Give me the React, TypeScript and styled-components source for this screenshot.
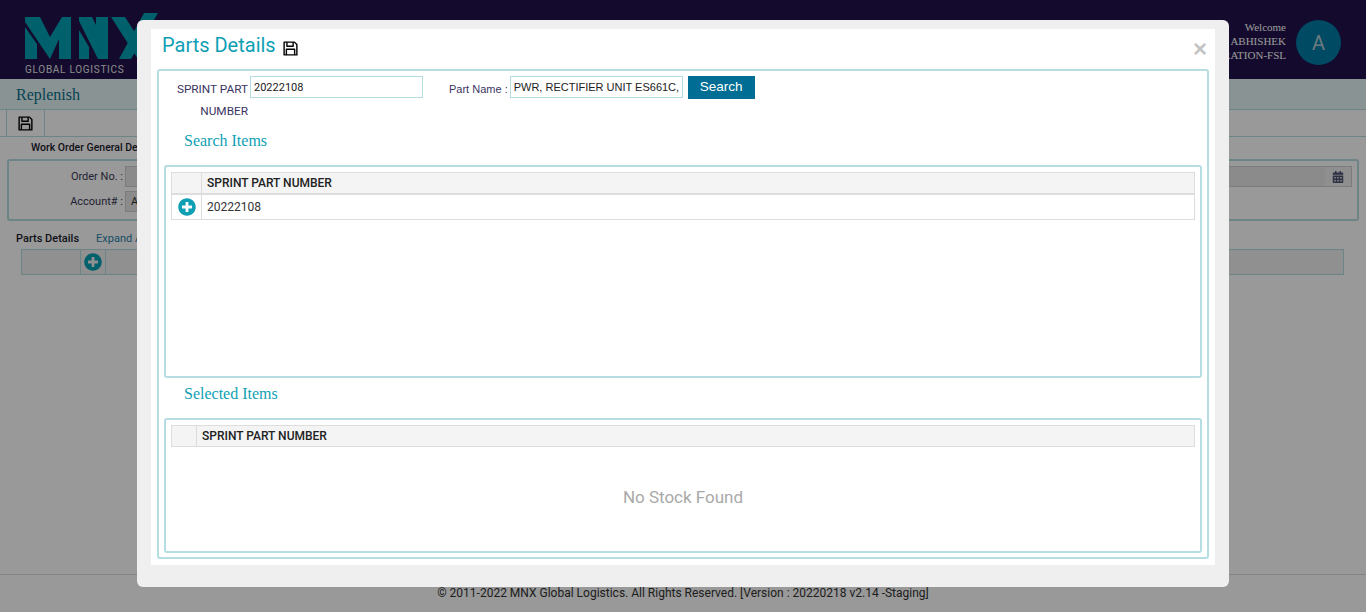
import styled, { createGlobalStyle } from "styled-components";
import { FaPlusCircle, FaCalendarAlt } from "react-icons/fa";

const GlobalStyle = createGlobalStyle`
  html, body {
    margin: 0;
    height: 100%;
    background: #fff;
    font-family: Roboto, "Liberation Sans", sans-serif;
    overflow: hidden;
  }
`;

const Page = styled.div`
  width: 1366px;
  height: 612px;
  display: flex;
  flex-direction: column;
  overflow: hidden;
`;

const Header = styled.header`
  height: 79px;
  flex: none;
  background: #20124b;
  display: flex;
  align-items: flex-start;
  justify-content: space-between;
  padding: 0 25px;
`;

const Brand = styled.div`
  display: flex;
  flex-direction: column;
  padding-top: 13px;
`;

const BrandName = styled.span`
  font-size: 10px;
  letter-spacing: 0.72px;
  color: #e6e6e6;
  margin-top: 4px;
  line-height: 12px;
`;

const User = styled.div`
  display: flex;
  gap: 10px;
  padding-top: 20px;
`;

const UserText = styled.div`
  font-family: "Liberation Serif", serif;
  font-size: 11px;
  line-height: 14px;
  color: #fff;
  text-align: right;
`;

const Avatar = styled.div`
  width: 45px;
  height: 45px;
  border-radius: 50%;
  background: #007ca5;
  color: #b5cbd6;
  font-size: 20px;
  display: flex;
  align-items: center;
  justify-content: center;
`;

const TitleBar = styled.div`
  height: 30px;
  flex: none;
  background: #e6f6f6;
  border-bottom: 1px solid #b6dde2;
  padding-left: 16px;
  font-family: "Liberation Serif", serif;
  font-size: 16px;
  line-height: 32px;
  color: #08708c;
`;

const ToolBar = styled.div`
  height: 26px;
  flex: none;
  border-bottom: 1px solid #b6dde2;
  padding-left: 6px;
  display: flex;
`;

const ToolButton = styled.div`
  width: 37px;
  border-left: 1px solid #b6dde2;
  border-right: 1px solid #b6dde2;
  display: flex;
  align-items: center;
  justify-content: center;
  color: #000;
`;

const GroupLabel = styled.div`
  font-size: 10.5px;
  font-weight: 500;
  color: #1c1c2c;
  padding-left: 31px;
  height: 22px;
  flex: none;
  line-height: 21px;
`;

const GeneralBox = styled.div`
  margin: 0 7px;
  height: 62px;
  flex: none;
  box-sizing: border-box;
  border: 2px solid #b6dde2;
  border-radius: 3px;
  display: flex;
  flex-direction: column;
  gap: 4px;
  padding: 5px 5px 0 0;
`;

const FormRow = styled.div`
  display: flex;
  height: 21px;
`;

const FormLabel = styled.span`
  width: 114px;
  margin-right: 2px;
  text-align: right;
  font-size: 11px;
  color: #3a3a55;
  line-height: 21px;
`;

const ReadField = styled.div<{ $wide?: boolean }>`
  box-sizing: border-box;
  width: ${(p) => (p.$wide ? "auto" : "300px")};
  flex: ${(p) => (p.$wide ? 1 : "none")};
  border: 1px solid #cfcfcf;
  background: #e8e8e8;
  display: flex;
  align-items: center;
  justify-content: space-between;
  padding-left: 5px;
  font-size: 11px;
  color: #333;
`;

const FieldAddon = styled.span`
  width: 26px;
  height: 100%;
  background: #eeeeee;
  display: flex;
  align-items: center;
  justify-content: center;
  color: #4c5270;
  font-size: 12px;
`;

const PartsRow = styled.div`
  display: flex;
  gap: 17px;
  padding: 10px 0 0 16px;
  font-size: 11px;
  line-height: 16px;
`;

const PartsTitle = styled.span`
  font-weight: 500;
  color: #1c1c2c;
`;

const PartsLink = styled.span`
  color: #2a7fa8;
`;

const PartsTable = styled.div`
  margin: 2px 22px 0 21px;
  height: 26px;
  flex: none;
  box-sizing: border-box;
  background: #f1f1f1;
  border: 1px solid #b6dde2;
  display: grid;
  grid-template-columns: 59px 25px 1fr;
`;

const PartsCell = styled.div`
  border-right: 1px solid #b6dde2;
  display: flex;
  align-items: center;
  justify-content: center;
  color: #00a0b4;
  font-size: 18px;
  &:last-child {
    border-right: none;
  }
`;

const PageBody = styled.div`
  flex: 1;
`;

const Footer = styled.footer`
  height: 38px;
  flex: none;
  box-sizing: border-box;
  border-top: 1px solid #ddd;
  text-align: center;
  font-size: 12px;
  line-height: 37px;
  color: #333;
`;

const Overlay = styled.div`
  position: fixed;
  inset: 0;
  background: rgba(0, 0, 0, 0.4);
`;

const Modal = styled.div`
  position: fixed;
  left: 137px;
  top: 20px;
  width: 1092px;
  height: 567px;
  box-sizing: border-box;
  background: #efefef;
  border-radius: 6px;
  padding: 9px 14px 22px;
`;

const ModalInner = styled.div`
  height: 100%;
  background: #fff;
  display: flex;
  flex-direction: column;
  padding: 0 6px 6px 6px;
  box-sizing: border-box;
`;

const ModalHead = styled.div`
  height: 40px;
  flex: none;
  display: flex;
  align-items: flex-start;
  justify-content: space-between;
  padding: 4px 2px 0 5px;
  box-sizing: border-box;
`;

const ModalTitle = styled.h2`
  margin: 0;
  font-weight: 400;
  font-size: 20px;
  line-height: 24px;
  color: #0f9fb5;
  display: flex;
  align-items: center;
  gap: 7px;
`;

const TitleIcon = styled.span`
  display: flex;
  color: #000;
  margin-top: 7px;
`;

const Close = styled.span`
  font-family: "Liberation Sans", sans-serif;
  font-size: 24px;
  font-weight: 700;
  line-height: 24px;
  margin-top: 4px;
  color: #c4c4c4;
`;

const OuterBox = styled.div`
  flex: 1;
  min-height: 0;
  border: 2px solid #b6dde2;
  border-radius: 3px;
  padding: 5px 5px 4px 5px;
  display: flex;
  flex-direction: column;
`;

const SearchForm = styled.div`
  display: flex;
  align-items: flex-start;
  height: 49px;
  flex: none;
  padding-left: 8px;
`;

const FieldLabel = styled.label`
  font-size: 12px;
  line-height: 22px;
  color: #3a3560;
  text-align: right;
  padding-top: 2px;
`;

const SprintLabel = styled(FieldLabel)`
  width: 76px;
  margin-right: 2px;
  font-size: 11.8px;
`;

const PartLabel = styled(FieldLabel)`
  margin-left: 26px;
  margin-right: 2px;
  font-family: "Liberation Sans", sans-serif;
  font-size: 11px;
  line-height: 23px;
  white-space: nowrap;
`;

const TextField = styled.input<{ $sans?: boolean }>`
  width: 173px;
  height: 22px;
  box-sizing: border-box;
  border: 1px solid #b6dde2;
  padding: 0 3px;
  font-size: 11px;
  color: #222;
  font-family: ${(p) => (p.$sans ? '"Liberation Sans", sans-serif' : "Roboto, sans-serif")};
  outline: none;
`;

const SearchButton = styled.button`
  width: 67px;
  height: 23px;
  margin: 0 0 0 5px;
  border: none;
  background: #006d94;
  color: #fff;
  font-family: "Liberation Sans", sans-serif;
  font-size: 13.5px;
  padding: 0 0 3px;
`;

const SectionTitle = styled.h3`
  margin: 0;
  height: 40px;
  flex: none;
  padding-left: 20px;
  font-family: "Liberation Serif", serif;
  font-weight: 400;
  font-size: 16px;
  line-height: 32px;
  color: #0f9fb5;
  box-sizing: border-box;
`;

const Section = styled.div<{ $height: number }>`
  height: ${(p) => p.$height}px;
  flex: none;
  box-sizing: border-box;
  border: 2px solid #b6dde2;
  border-radius: 3px;
  padding: 5px 5px 0;
  display: flex;
  flex-direction: column;
`;

const GridRow = styled.div<{ $cols: string; $head?: boolean; $h: number; $thin?: boolean }>`
  display: grid;
  grid-template-columns: ${(p) => p.$cols};
  height: ${(p) => p.$h}px;
  flex: none;
  box-sizing: border-box;
  border: 1px solid #ddd;
  border-top-width: ${(p) => (p.$head ? 1 : 0)}px;
  border-bottom-width: ${(p) => (p.$head && !p.$thin ? 2 : 1)}px;
  background: ${(p) => (p.$head ? "#f4f4f4" : "#fff")};
`;

const GridCell = styled.div<{ $head?: boolean }>`
  display: flex;
  align-items: center;
  padding-left: 5px;
  border-left: 1px solid #ddd;
  font-size: 12px;
  font-weight: ${(p) => (p.$head ? 500 : 400)};
  color: ${(p) => (p.$head ? "#222" : "#333")};
  &:first-child {
    border-left: none;
    padding-left: 0;
    justify-content: center;
  }
`;

const AddIcon = styled(FaPlusCircle)`
  color: #0f9fb5;
  font-size: 18px;
`;

const EmptyText = styled.div`
  flex: 1;
  display: flex;
  align-items: center;
  justify-content: center;
  font-size: 17px;
  color: #a9a9a9;
  padding-bottom: 4px;
`;

function Logo() {
  return (
    <svg width="133" height="47" viewBox="0 0 133 47" fill="#00a0b4">
      <polygon points="0,14 12,31 12,46 0,46" />
      <polygon points="0,4 15,4 25,24 37,4 46,4 46,46 34,46 34,26 25,46 0,9" />
      <polygon points="54,17 64,34 64,46 54,46" />
      <polygon points="54,4 67,4 71,12 71,4 83,4 83,46 73,46 54,8" />
      <polygon points="86,4 100,4 127,46 113,46" />
      <polygon points="119,0 133,0 106,46 94,46" />
    </svg>
  );
}

function FloppyIcon() {
  return (
    <svg width="15" height="15" viewBox="0 0 16 16" fill="none" stroke="currentColor" strokeWidth="1.5" strokeLinejoin="round">
      <path d="M1.2 1.2h11l2.6 2.6v11h-13.6z" />
      <path d="M4.2 1.2v4.4h6.6v-4.4" />
      <path d="M3.6 14.8v-6h8.8v6" />
    </svg>
  );
}

export default function App() {
  return (
    <Page>
      <GlobalStyle />
      <Header>
        <Brand>
          <Logo />
          <BrandName>GLOBAL LOGISTICS</BrandName>
        </Brand>
        <User>
          <UserText>
            Welcome
            <br />
            ABHISHEK
            <br />
            OPERATION-FSL
          </UserText>
          <Avatar>A</Avatar>
        </User>
      </Header>
      <TitleBar>Replenish</TitleBar>
      <ToolBar>
        <ToolButton>
          <FloppyIcon />
        </ToolButton>
      </ToolBar>
      <GroupLabel>Work Order General Details</GroupLabel>
      <GeneralBox>
        <FormRow>
          <FormLabel>Order No. :</FormLabel>
          <ReadField $wide>
            <span />
            <FieldAddon>
              <FaCalendarAlt />
            </FieldAddon>
          </ReadField>
        </FormRow>
        <FormRow>
          <FormLabel>Account# :</FormLabel>
          <ReadField>A</ReadField>
        </FormRow>
      </GeneralBox>
      <PartsRow>
        <PartsTitle>Parts Details</PartsTitle>
        <PartsLink>Expand All</PartsLink>
      </PartsRow>
      <PartsTable>
        <PartsCell />
        <PartsCell>
          <FaPlusCircle />
        </PartsCell>
        <PartsCell />
      </PartsTable>
      <PageBody />
      <Footer>© 2011-2022 MNX Global Logistics. All Rights Reserved. [Version : 20220218 v2.14 -Staging]</Footer>

      <Overlay />
      <Modal>
        <ModalInner>
          <ModalHead>
            <ModalTitle>
              Parts Details
              <TitleIcon>
                <FloppyIcon />
              </TitleIcon>
            </ModalTitle>
            <Close>×</Close>
          </ModalHead>
          <OuterBox>
            <SearchForm>
              <SprintLabel>SPRINT PART NUMBER</SprintLabel>
              <TextField readOnly value="20222108" />
              <PartLabel>Part Name :</PartLabel>
              <TextField $sans readOnly value="PWR, RECTIFIER UNIT ES661C," />
              <SearchButton>Search</SearchButton>
            </SearchForm>
            <SectionTitle>Search Items</SectionTitle>
            <Section $height={213}>
              <GridRow $cols="29px 1fr" $head $h={23}>
                <GridCell $head />
                <GridCell $head>SPRINT PART NUMBER</GridCell>
              </GridRow>
              <GridRow $cols="29px 1fr" $h={25}>
                <GridCell>
                  <AddIcon />
                </GridCell>
                <GridCell>20222108</GridCell>
              </GridRow>
            </Section>
            <SectionTitle>Selected Items</SectionTitle>
            <Section $height={135}>
              <GridRow $cols="24px 1fr" $head $thin $h={22}>
                <GridCell $head />
                <GridCell $head>SPRINT PART NUMBER</GridCell>
              </GridRow>
              <EmptyText>No Stock Found</EmptyText>
            </Section>
          </OuterBox>
        </ModalInner>
      </Modal>
    </Page>
  );
}
